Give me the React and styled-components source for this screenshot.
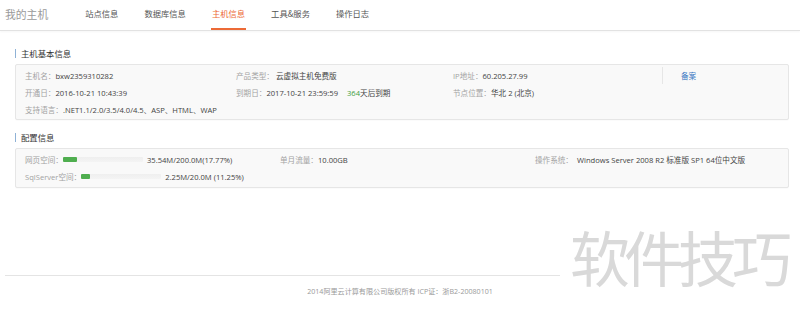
import React from "react";
import styled, { createGlobalStyle } from "styled-components";

const GlobalStyle = createGlobalStyle`
  html, body { margin: 0; padding: 0; background: #fff; }
  body { font-family: "Open Sans", "Noto Sans CJK SC", sans-serif; }
  * { box-sizing: border-box; }
`;

const Page = styled.div`
  position: relative;
  width: 800px;
  height: 321px;
  overflow: hidden;
  background: #fff;
`;

const Header = styled.header`
  display: flex;
  align-items: stretch;
  height: 31px;
  padding-left: 5px;
  border-bottom: 1px solid #e2e2e2;
  box-shadow: 0 1px 2px rgba(0, 0, 0, 0.04);
`;

const Brand = styled.div`
  display: flex;
  align-items: center;
  padding-bottom: 3px;
  font-family: "Noto Sans CJK SC", sans-serif;
  font-size: 10.8px;
  color: #9a9a9a;
  margin-right: 37px;
`;

const Tabs = styled.nav`
  display: flex;
  gap: 26px;
`;

const Tab = styled.a`
  position: relative;
  display: flex;
  align-items: center;
  padding-bottom: 4px;
  font-family: "Noto Sans CJK SC", sans-serif;
  font-size: 8.3px;
  color: ${(p) => (p.$active ? "#ec6a36" : "#555")};
  text-decoration: none;
  cursor: pointer;
  &::after {
    content: "";
    display: ${(p) => (p.$active ? "block" : "none")};
    position: absolute;
    left: -1px;
    right: -1px;
    bottom: 0;
    height: 2px;
    background: #ec6a36;
  }
`;

const Main = styled.main`
  padding: 0 11px 0 15px;
`;

const SectionTitle = styled.h3`
  display: flex;
  align-items: center;
  gap: 5px;
  height: 12px;
  margin: ${(p) => (p.$first ? "16px" : "11px")} 0 5px;
  font-family: "Noto Sans CJK SC", sans-serif;
  font-size: 8.4px;
  font-weight: normal;
  color: #333;
  &::before {
    content: "";
    width: 1px;
    height: 9px;
    background: #8fb2d6;
  }
`;

const Card = styled.div`
  display: grid;
  grid-template-columns: ${(p) => p.$cols};
  grid-auto-rows: 17px;
  padding: ${(p) => p.$pad};
  padding-left: 9px;
  background: #f9f9f9;
  border: 1px solid #e6e6e6;
  border-radius: 2px;
  box-shadow: 0 1px 1px rgba(0, 0, 0, 0.02);
`;

const Cell = styled.div`
  display: flex;
  align-items: center;
  white-space: nowrap;
  font-size: 7.6px;
  color: #444;
  grid-column: ${(p) => p.$span || "auto"};
`;

const Label = styled.span`
  color: #a3a3a3;
`;

const Value = styled.span`
  color: #444;
  margin-left: ${(p) => p.$gap || 0}px;
`;

const Green = styled.span`
  color: #3f9d3f;
`;

const Remain = styled.span`
  margin-left: 9px;
  color: #444;
`;

const ActionCell = styled.div`
  display: flex;
  align-items: center;
  padding-left: 18px;
  border-left: 1px solid #e6e6e6;
`;

const Link = styled.a`
  font-family: "Noto Sans CJK SC", sans-serif;
  font-size: 7.6px;
  color: #3a78c3;
  cursor: pointer;
`;

const Track = styled.div`
  position: relative;
  width: 80px;
  height: 5px;
  margin: 0 4px 0 0;
  background: linear-gradient(#efefef, #f4f4f4);
  border-radius: 1px;
`;

const Fill = styled.div`
  height: 100%;
  background: #4fae4f;
  border-radius: 1px;
`;

const Footer = styled.footer`
  margin: 87px 5px 0;
  border-top: 1px solid #e4e4e4;
  padding-top: 10px;
  text-align: center;
  font-size: 7.1px;
  line-height: 10px;
  color: #9a9a9a;
`;

const Watermark = styled.div`
  position: absolute;
  left: 560px;
  top: 226px;
  padding-left: 10px;
  padding-right: 10px;
  background: #fff;
  font-family: "Noto Sans CJK SC", sans-serif;
  font-size: 60px;
  line-height: 60px;
  letter-spacing: -6px;
  color: #d9d9d9;
`;

const Progress = ({ pct }) => (
  <Track>
    <Fill style={{ width: `${pct}%` }} />
  </Track>
);

export default function App() {
  const tabs = ["站点信息", "数据库信息", "主机信息", "工具&服务", "操作日志"];
  return (
    <>
      <GlobalStyle />
      <Page>
        <Header>
          <Brand>我的主机</Brand>
          <Tabs>
            {tabs.map((t) => (
              <Tab key={t} $active={t === "主机信息"}>
                {t}
              </Tab>
            ))}
          </Tabs>
        </Header>
        <Main>
          <SectionTitle $first>主机基本信息</SectionTitle>
          <Card $cols="211px 217px 209px 1fr" $pad="2px 0 1px">
            <Cell>
              <Label>主机名：</Label>
              <Value>bxw2359310282</Value>
            </Cell>
            <Cell>
              <Label>产品类型：</Label>
              <Value $gap={2}>云虚拟主机免费版</Value>
            </Cell>
            <Cell>
              <Label>IP地址：</Label>
              <Value>60.205.27.99</Value>
            </Cell>
            <ActionCell>
              <Link>备案</Link>
            </ActionCell>
            <Cell>
              <Label>开通日：</Label>
              <Value>2016-10-21 10:43:39</Value>
            </Cell>
            <Cell>
              <Label>到期日：</Label>
              <Value>2017-10-21 23:59:59</Value>
              <Remain>
                <Green>364</Green>天后到期
              </Remain>
            </Cell>
            <Cell $span="3 / 5">
              <Label>节点位置：</Label>
              <Value>华北 2 (北京)</Value>
            </Cell>
            <Cell $span="1 / 5">
              <Label>支持语言：</Label>
              <Value>.NET1.1/2.0/3.5/4.0/4.5、ASP、HTML、WAP</Value>
            </Cell>
          </Card>

          <SectionTitle>配置信息</SectionTitle>
          <Card $cols="255px 255px 1fr" $pad="2px 0 2px">
            <Cell>
              <Label>网页空间：</Label>
              <Progress pct={17.77} />
              <Value>35.54M/200.0M(17.77%)</Value>
            </Cell>
            <Cell>
              <Label>单月流量：</Label>
              <Value>10.00GB</Value>
            </Cell>
            <Cell>
              <Label>操作系统：</Label>
              <Value $gap={4}>Windows Server 2008 R2 标准版 SP1 64位中文版</Value>
            </Cell>
            <Cell $span="1 / 4">
              <Label>SqlServer空间：</Label>
              <Progress pct={11.25} />
              <Value>2.25M/20.0M (11.25%)</Value>
            </Cell>
          </Card>
        </Main>
        <Footer>2014阿里云计算有限公司版权所有 ICP证：浙B2-20080101</Footer>
        <Watermark>软件技巧</Watermark>
      </Page>
    </>
  );
}
